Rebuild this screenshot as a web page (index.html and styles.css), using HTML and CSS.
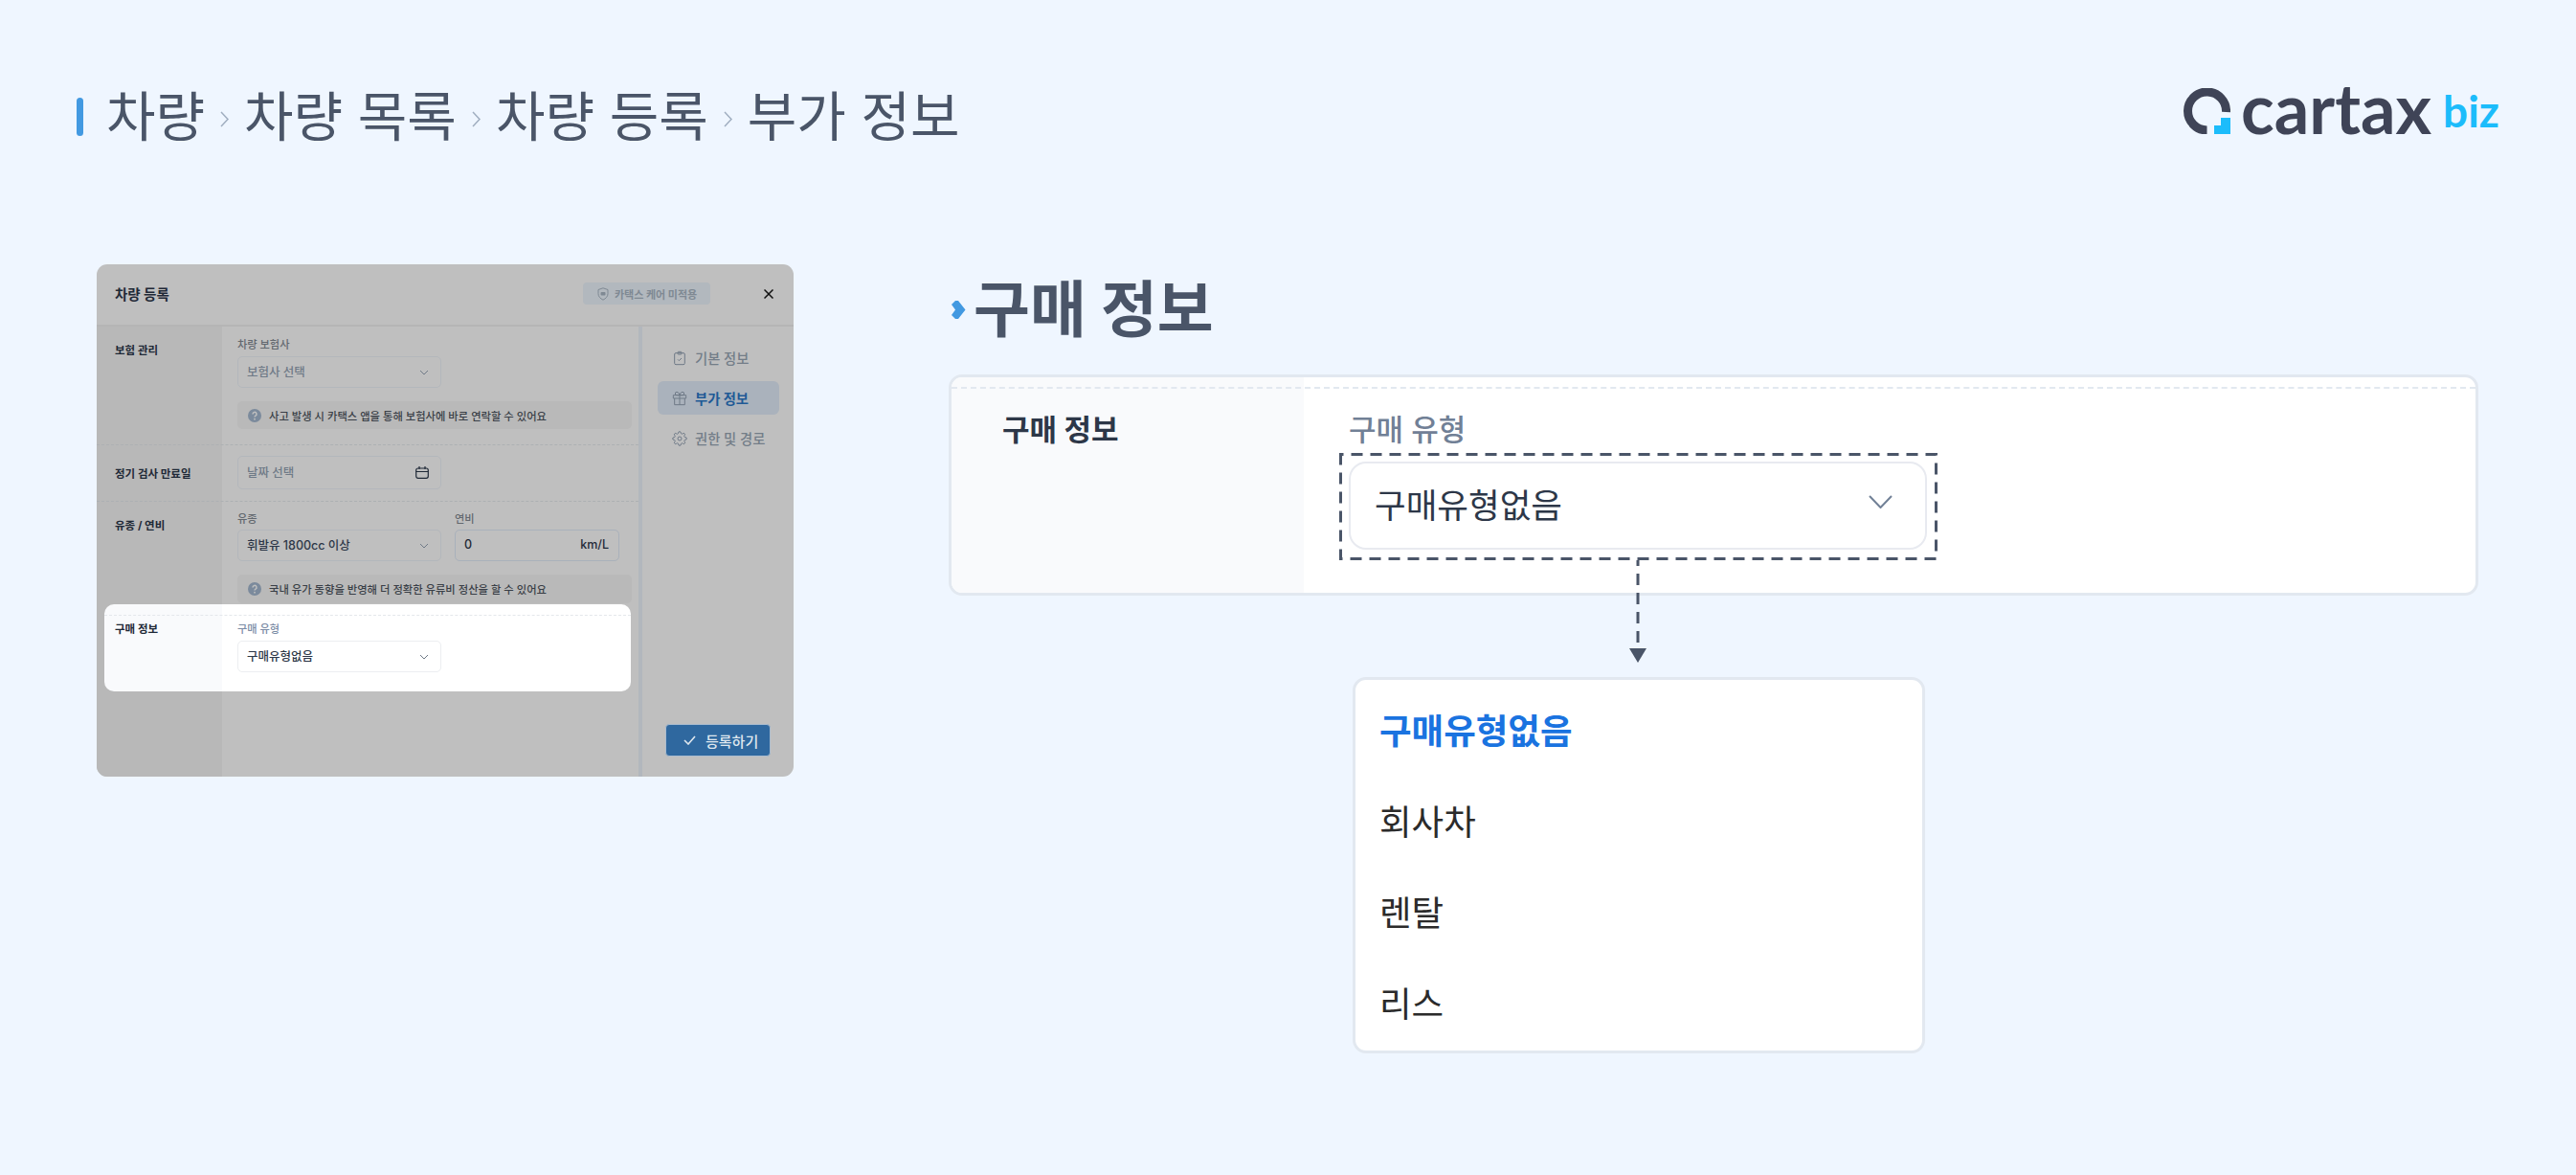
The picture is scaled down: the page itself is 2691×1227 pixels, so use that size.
FILE: index.html
```html
<!DOCTYPE html>
<html lang="ko">
<head>
  <meta charset="UTF-8" />
  <title>차량 등록 - 부가 정보</title>
  <link rel="stylesheet" href="styles.css">
</head>
<body>
  <div class="topbar">
    <div class="crumbs">
      <span class="crumb-mark"></span>
      <span>차량</span>
      <svg class="crumb-sep" viewBox="0 0 9 17"><path d="M1 1l7 7.500-7 7.500"/></svg>
      <span>차량 목록</span>
      <svg class="crumb-sep" viewBox="0 0 9 17"><path d="M1 1l7 7.500-7 7.500"/></svg>
      <span>차량 등록</span>
      <svg class="crumb-sep" viewBox="0 0 9 17"><path d="M1 1l7 7.500-7 7.500"/></svg>
      <span>부가 정보</span>
    </div>
    <div class="logo">
      <svg class="logo-mark" viewBox="0 0 49 48">
        <path d="M44.500 25A20 20 0 1 0 24.500 44" fill="none" stroke="#3f4457" stroke-width="9"/>
        <polygon points="39,31 49,31 49,48 32,48 32,39 39,39" fill="#1cbcfb"/>
      </svg>
      <span class="logo-word">cartax</span>
      <span class="logo-biz">biz</span>
    </div>
  </div>

  <div class="content">
    <div class="modal">
      <div class="m-head">
        <span class="m-title">차량 등록</span>
        <span class="m-pill">
          <svg viewBox="0 0 12 14"><path d="M6 .8l5 1.700v4.200c0 3-2.200 5-5 6.500-2.800-1.500-5-3.500-5-6.500V2.500z" fill="none" stroke="#7f8993"/><rect x="3.500" y="5" width="5" height="3.500" rx="1" fill="#7f8993"/></svg>
          카택스 케어 미적용
        </span>
        <svg class="m-close" viewBox="0 0 10 10"><path d="M.5.500l9 9M9.500.500l-9 9"/></svg>
      </div>
      <div class="m-body">
        <div class="m-main">
          <div class="m-row m-row-1">
            <div class="m-label">보험 관리</div>
            <div class="m-fields">
              <div class="m-cap">차량 보험사</div>
              <div class="m-select m-muted"><span>보험사 선택</span>
                <svg class="m-chev" viewBox="0 0 10 6"><path d="M1 1l4 4 4-4"/></svg>
              </div>
              <div class="m-info">
                <svg viewBox="0 0 14 14"><circle cx="7" cy="7" r="7" fill="#7b8a9c"/><path d="M5 5.400a2 2 0 1 1 3 1.700c-.7.400-1 .8-1 1.400" fill="none" stroke="#bfbfbf" stroke-width="1.500"/><circle cx="7" cy="10.700" r=".9" fill="#bfbfbf"/></svg>
                사고 발생 시 카택스 앱을 통해 보험사에 바로 연락할 수 있어요
              </div>
            </div>
          </div>
          <div class="m-row m-row-2">
            <div class="m-label">정기 검사 만료일</div>
            <div class="m-fields">
              <div class="m-select m-date m-muted"><span>날짜 선택</span>
                <svg class="m-cal" viewBox="0 0 14 13"><rect x=".7" y="2" width="12.600" height="10.300" rx="2"/><path d="M.7 5.500h12.600M4 0v3M10 0v3"/></svg>
              </div>
            </div>
          </div>
          <div class="m-row m-row-3">
            <div class="m-label">유종 / 연비</div>
            <div class="m-fields">
              <div class="m-pair">
                <div>
                  <div class="m-cap">유종</div>
                  <div class="m-select"><span>휘발유 1800cc 이상</span>
                    <svg class="m-chev" viewBox="0 0 10 6"><path d="M1 1l4 4 4-4"/></svg>
                  </div>
                </div>
                <div>
                  <div class="m-cap">연비</div>
                  <div class="m-select m-input"><span>0</span><span>km/L</span></div>
                </div>
              </div>
              <div class="m-info">
                <svg viewBox="0 0 14 14"><circle cx="7" cy="7" r="7" fill="#7b8a9c"/><path d="M5 5.400a2 2 0 1 1 3 1.700c-.7.400-1 .8-1 1.400" fill="none" stroke="#bfbfbf" stroke-width="1.500"/><circle cx="7" cy="10.700" r=".9" fill="#bfbfbf"/></svg>
                국내 유가 동향을 반영해 더 정확한 유류비 정산을 할 수 있어요
              </div>
            </div>
          </div>
          <div class="m-hl">
            <div class="m-hl-label">구매 정보</div>
            <div class="m-hl-fields">
              <div class="m-cap">구매 유형</div>
              <div class="m-select"><span>구매유형없음</span>
                <svg class="m-chev" viewBox="0 0 10 6"><path d="M1 1l4 4 4-4"/></svg>
              </div>
            </div>
          </div>
        </div>
        <div class="m-side">
          <div class="m-nav">
            <svg viewBox="0 0 24 24"><rect x="4" y="4" width="16" height="18" rx="2"/><rect x="9" y="2" width="6" height="4" rx="1"/><path d="M9 14l2 2 4-4"/></svg>
            기본 정보
          </div>
          <div class="m-nav m-nav-on">
            <svg viewBox="0 0 24 24"><path d="M20 12v10H4V12M2 7h20v5H2zM12 22V7M12 7H7.500a2.500 2.500 0 0 1 0-5C11 2 12 7 12 7zM12 7h4.500a2.500 2.500 0 0 0 0-5C13 2 12 7 12 7z"/></svg>
            부가 정보
          </div>
          <div class="m-nav">
            <svg viewBox="0 0 24 24"><circle cx="12" cy="12" r="3"/><path d="M19.400 15a1.650 1.650 0 0 0 .33 1.820l.06.06a2 2 0 0 1-2.830 2.830l-.06-.06a1.650 1.650 0 0 0-2.820 1.180V21a2 2 0 0 1-4 0v-.09A1.650 1.650 0 0 0 7.180 19.730l-.06.06a2 2 0 0 1-2.830-2.830l.06-.06a1.650 1.650 0 0 0-1.180-2.820H3a2 2 0 0 1 0-4h.09A1.650 1.650 0 0 0 4.270 7.180l-.06-.06a2 2 0 0 1 2.830-2.830l.06.06a1.650 1.650 0 0 0 2.820-1.180V3a2 2 0 0 1 4 0v.09a1.650 1.650 0 0 0 2.820 1.180l.06-.06a2 2 0 0 1 2.830 2.830l-.06.06a1.650 1.650 0 0 0 1.180 2.820H21a2 2 0 0 1 0 4h-.09a1.650 1.650 0 0 0-1.510 1z"/></svg>
            권한 및 경로
          </div>
          <div class="m-submit">
            <svg viewBox="0 0 13 10"><path d="M1 5l4 4 7-8"/></svg>
            등록하기
          </div>
        </div>
      </div>
    </div>

    <div class="detail">
      <h2 class="detail-title">
        <svg viewBox="0 0 15 19"><polygon points="0,4 4,0 7,0 14.500,9.500 7,19 4,19 0,15 4,9.500"/></svg>
        구매 정보
      </h2>
      <div class="card">
        <div class="card-label">구매 정보</div>
        <div class="card-field">
          <div class="card-cap">구매 유형</div>
          <div class="select-wrap">
            <div class="select">
              <span>구매유형없음</span>
              <svg viewBox="0 0 25 14"><path d="M1 1l11.500 12L24 1"/></svg>
            </div>
            <svg class="dash-box" viewBox="0 0 625 112"><rect x="1.500" y="1.500" width="622" height="109"/></svg>
            <svg class="dash-arrow" viewBox="0 0 20 107"><path d="M10 0v92"/><polygon points="1,92 19,92 10,107"/></svg>
          </div>
        </div>
      </div>
      <div class="options">
        <div class="option option-on">구매유형없음</div>
        <div class="option">회사차</div>
        <div class="option">렌탈</div>
        <div class="option">리스</div>
      </div>
    </div>
  </div>
</body>
</html>
```

FILE: styles.css
```css
* { box-sizing: border-box; }
body {
  margin: 0;
  height: 1227px;
  overflow: hidden;
  background: #eff6ff;
  font-family: Inter, "Noto Sans CJK KR", sans-serif;
  color: #2d3748;
}

/* top row */
.topbar {
  display: flex;
  justify-content: space-between;
  align-items: flex-start;
  padding: 80px 80px 0 80px;
  height: 164px;
}
.crumbs {
  display: flex;
  align-items: center;
  height: 84px;
  font-size: 56px;
  line-height: 84px;
  color: #4a5568;
}
.crumb-mark {
  width: 7px;
  height: 40px;
  margin-right: 24px;
  border-radius: 4px;
  background: #4299e1;
}
.crumb-sep {
  width: 9px;
  height: 17px;
  margin: 4px 16px 0;
  fill: none;
  stroke: #a0aec0;
  stroke-width: 1.500;
}
.logo {
  display: flex;
  align-items: flex-start;
  height: 60px;
  font-family: Lato, sans-serif;
  font-weight: 700;
}
.logo-mark {
  width: 49px;
  height: 48px;
  margin: 12px 11px 0 0;
}
.logo-word {
  font-size: 72px;
  line-height: 60px;
  margin-top: 2px;
  color: #3f4457;
}
.logo-biz {
  font-size: 46px;
  line-height: 46px;
  margin: 13px 0 0 12px;
  color: #1cbcfb;
}

.content {
  display: flex;
  align-items: flex-start;
  gap: 162px;
  padding: 112px 0 0 101px;
}

/* small dimmed modal on the left */
.modal {
  flex: none;
  display: flex;
  flex-direction: column;
  width: 728px;
  height: 535px;
  border-radius: 11px;
  background: #bfbfbf;
  overflow: hidden;
  font-size: 11.300px;
  font-weight: 500;
}
.m-head {
  display: flex;
  align-items: center;
  height: 65px;
  padding: 0 21px 2px 19px;
  border-bottom: 2px solid #b5b5b5;
}
.m-title {
  flex: 1;
  font-size: 14.500px;
  font-weight: 700;
  color: #1f2937;
}
.m-pill {
  display: flex;
  align-items: center;
  gap: 6px;
  width: 133px;
  height: 23px;
  padding-left: 15px;
  border-radius: 4px;
  background: #b2b8be;
  color: #7f8993;
  font-size: 11px;
  font-weight: 700;
}
.m-pill svg { width: 12px; height: 14px; }
.m-close {
  width: 10px;
  height: 10px;
  margin-left: 56px;
  fill: none;
  stroke: #111;
  stroke-width: 1.500;
}
.m-body { flex: 1; display: flex; min-height: 0; }
.m-main {
  width: 570px;
  border-right: 4px solid #b2b7bd;
  background: linear-gradient(to right, #b8b8b8 131px, transparent 131px);
}
.m-row {
  display: grid;
  grid-template-columns: 131px 1fr;
  border-bottom: 1px dashed #adb0b3;
}
.m-label {
  padding-left: 19px;
  font-size: 11.500px;
  font-weight: 700;
  line-height: 16px;
  color: #1f2937;
}
.m-fields { padding-left: 16px; padding-right: 7px; }
.m-row-1 { height: 124px; padding-top: 11px; }
.m-row-1 .m-label { padding-top: 6px; }
.m-row-2 { height: 59px; padding-top: 11px; }
.m-row-2 .m-label { padding-top: 11px; }
.m-row-3 { height: 107px; padding-top: 10px; border-bottom: 0; }
.m-row-3 .m-label { padding-top: 7px; }
.m-row-3 .m-info { margin-top: 14px; height: 30px; }
.m-pair {
  display: grid;
  grid-template-columns: 213px 172px;
  gap: 14px;
}
.m-cap {
  height: 16px;
  margin-bottom: 4px;
  font-size: 11.200px;
  line-height: 16px;
  color: #63686f;
}
.m-pair .m-cap { margin-bottom: 3px; }
.m-select {
  display: flex;
  align-items: center;
  justify-content: space-between;
  width: 213px;
  height: 33px;
  padding: 0 12px 0 9px;
  border: 1px solid #b3b7bc;
  border-radius: 5px;
  font-size: 12.500px;
  color: #2d3748;
}
.m-select span { margin-top: -2px; }
.m-muted { color: #6f7a87; }
.m-date { height: 35px; }
.m-input {
  width: 172px;
  padding-right: 10px;
  border: 1.500px solid #a9b1bb;
  color: #1f2937;
}
.m-chev {
  width: 10px;
  height: 6px;
  fill: none;
  stroke: #6f7a87;
}
.m-cal {
  width: 14px;
  height: 13px;
  fill: none;
  stroke: #1f2937;
  stroke-width: 1.200;
}
.m-info {
  display: flex;
  align-items: center;
  gap: 8px;
  height: 29px;
  margin-top: 14px;
  padding-left: 11px;
  border-radius: 5px;
  background: #b9b9b9;
  color: #3a3f47;
}
.m-info svg { flex: none; width: 14px; height: 14px; }
.m-hl {
  position: relative;
  display: grid;
  grid-template-columns: 123px 1fr;
  width: 550px;
  height: 91px;
  margin-left: 8px;
  border-radius: 10px;
  background: linear-gradient(to right, #f9fafc 123px, #fff 123px);
}
.m-hl::before {
  content: "";
  position: absolute;
  left: 0;
  right: 0;
  top: 11px;
  border-top: 1px dashed #e4e7eb;
}
.m-hl-label {
  padding: 18px 0 0 11px;
  font-size: 11.500px;
  font-weight: 700;
  line-height: 16px;
  color: #1f2937;
}
.m-hl-fields { padding: 18px 0 0 16px; }
.m-hl .m-cap { color: #7c8da6; }
.m-hl .m-select { border-color: #eceef1; }
.m-side {
  flex: 1;
  display: flex;
  flex-direction: column;
  gap: 7px;
  padding: 15px 15px 21px 16px;
}
.m-nav {
  display: flex;
  align-items: center;
  gap: 8px;
  height: 35px;
  padding-left: 15px;
  border-radius: 6px;
  font-size: 14.300px;
  color: #737d88;
}
.m-nav svg {
  width: 16px;
  height: 16px;
  fill: none;
  stroke: #6f7a87;
  stroke-width: 1.500;
}
.m-nav-on {
  background: #aab2bc;
  color: #1f5a96;
  font-weight: 700;
}
.m-submit {
  display: flex;
  align-items: center;
  gap: 10px;
  width: 110px;
  height: 34px;
  margin: auto 0 0 8px;
  padding-left: 18px;
  border: 1px solid #a9bccf;
  border-radius: 4px;
  background: #2f689f;
  color: #dfe7ee;
  font-size: 15px;
}
.m-submit svg {
  width: 13px;
  height: 10px;
  fill: none;
  stroke: #dfe7ee;
  stroke-width: 1.600;
}

/* big detail on the right */
.detail { flex: none; width: 1598px; padding-top: 15px; }
.detail-title {
  display: flex;
  align-items: center;
  gap: 8px;
  height: 64px;
  margin: 0 0 36px;
  padding-left: 3px;
  font-size: 64px;
  font-weight: 700;
  line-height: 64px;
  color: #4a5568;
}
.detail-title svg { flex: none; width: 15px; height: 19px; fill: #4299e1; }
.card {
  position: relative;
  display: grid;
  grid-template-columns: 368px 1fr;
  height: 231px;
  border: 3px solid #e2e8f0;
  border-radius: 14px;
  background: #fff;
}
.card::before {
  content: "";
  position: absolute;
  left: 0;
  right: 0;
  top: 10px;
  border-top: 2px dashed #e2e8f0;
}
.card-label {
  padding: 35px 0 0 53px;
  border-radius: 11px 0 0 11px;
  background: #f9fafc;
  font-size: 31px;
  font-weight: 700;
  line-height: 40px;
  color: #2d3748;
}
.card-field { padding: 35px 0 0 47px; }
.card-cap {
  font-size: 31px;
  font-weight: 500;
  line-height: 40px;
  color: #718096;
}
.select-wrap { position: relative; width: 604px; margin-top: 13px; }
.select {
  display: flex;
  align-items: center;
  justify-content: space-between;
  height: 92px;
  padding: 0 34px 0 25px;
  border: 2px solid #e8eaf0;
  border-radius: 18px;
  font-size: 35.500px;
  color: #2d3748;
}
.select span { margin-top: -5px; }
.select svg {
  width: 25px;
  height: 14px;
  margin-top: -8px;
  fill: none;
  stroke: #718096;
  stroke-width: 2;
}
.dash-box {
  position: absolute;
  left: -10px;
  top: -9px;
  width: 625px;
  height: 112px;
  fill: none;
  stroke: #4a5568;
  stroke-width: 3;
  stroke-dasharray: 12 8;
  stroke-dashoffset: 9;
}
.dash-arrow {
  position: absolute;
  left: 292px;
  top: 103px;
  width: 20px;
  height: 107px;
  fill: #4a5568;
  stroke: none;
}
.dash-arrow path {
  fill: none;
  stroke: #4a5568;
  stroke-width: 3;
  stroke-dasharray: 12 8;
  stroke-dashoffset: 6;
}
.options {
  width: 598px;
  height: 393px;
  margin: 85px 0 0 422px;
  padding: 7px 0 0 25px;
  border: 3px solid #e2e8f0;
  border-radius: 14px;
  background: #fff;
}
.option {
  height: 95px;
  font-size: 36.500px;
  line-height: 95px;
  color: #2b2b2b;
}
.option-on {
  color: #1a73e0;
  font-weight: 700;
}
```
